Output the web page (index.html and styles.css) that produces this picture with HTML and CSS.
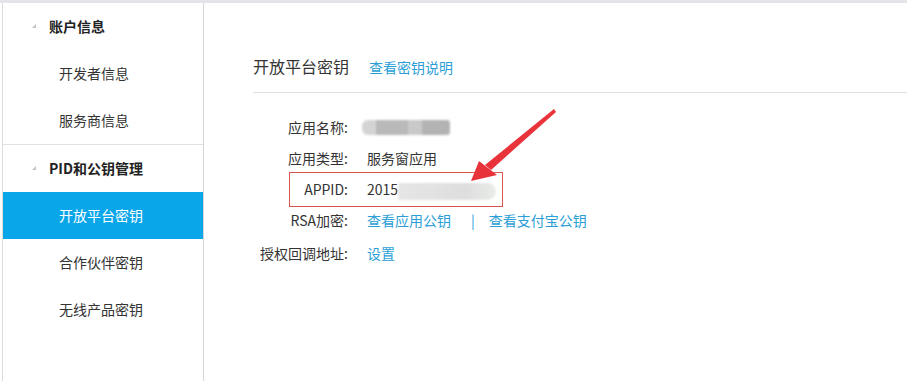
FILE: index.html
```html
<!DOCTYPE html>
<html lang="zh-CN">
<head>
    <meta charset="UTF-8">
    <title>开放平台密钥</title>
    <link rel="stylesheet" href="styles.css">
</head>
<body>
    <div class="page">
        <div class="sidebar">
            <div class="menu-group">
                <div class="group-title"><span class="caret"></span>账户信息</div>
                <div class="menu-item">开发者信息</div>
                <div class="menu-item">服务商信息</div>
            </div>
            <div class="menu-group">
                <div class="group-title"><span class="caret"></span>PID和公钥管理</div>
                <div class="menu-item active">开放平台密钥</div>
                <div class="menu-item">合作伙伴密钥</div>
                <div class="menu-item">无线产品密钥</div>
            </div>
        </div>
        <div class="main">
            <div class="title-bar">
                <h1>开放平台密钥</h1>
                <a class="link">查看密钥说明</a>
            </div>
            <div class="info-list">
                <div class="info-row">
                    <span class="label">应用名称:</span>
                    <span class="value"><span class="blur-name"><i></i><i></i><i></i><i></i></span></span>
                </div>
                <div class="info-row">
                    <span class="label">应用类型:</span>
                    <span class="value">服务窗应用</span>
                </div>
                <div class="info-row highlight">
                    <span class="label">APPID:</span>
                    <span class="value">2015<span class="blur-id"></span></span>
                </div>
                <div class="info-row">
                    <span class="label">RSA加密:</span>
                    <span class="value"><a class="link">查看应用公钥</a><span class="sep">|</span><a class="link">查看支付宝公钥</a></span>
                </div>
                <div class="info-row last">
                    <span class="label">授权回调地址:</span>
                    <span class="value"><a class="link">设置</a></span>
                </div>
            </div>
        </div>
    </div>
    <svg class="arrow" width="907" height="381" viewBox="0 0 907 381">
        <polygon points="554,109 556,112 491,170 485,165" fill="#e8333a"/>
        <polygon points="471,181 479,161 497,175" fill="#e8333a"/>
    </svg>
</body>
</html>
```

FILE: styles.css
```css
* {
    margin: 0;
    padding: 0;
    box-sizing: border-box;
}

body {
    font-family: "Noto Sans CJK SC", "Liberation Sans", sans-serif;
    font-size: 14px;
    color: #333;
    background: #fff;
    position: relative;
    width: 907px;
    height: 381px;
    overflow: hidden;
}

.page {
    display: flex;
    border-top: 3px solid #e4e5e8;
    height: 381px;
}

.sidebar {
    width: 202px;
    margin-left: 2px;
    border-left: 1px solid #dcdcdc;
    border-right: 1px solid #d6d6d6;
    flex-shrink: 0;
}

.menu-group {
    border-bottom: 1px solid #e2e2e2;
}

.menu-group:last-child {
    border-bottom: none;
}

.group-title {
    height: 47px;
    line-height: 47px;
    padding-left: 29px;
    font-weight: bold;
    color: #222;
    display: flex;
    align-items: center;
}

/* small grey corner arrow before group titles */
.caret {
    width: 0;
    height: 0;
    border-left: 4px solid transparent;
    border-bottom: 4px solid #c4c4c4;
    margin-right: 13px;
    margin-top: -1px;
}

.menu-item {
    height: 47px;
    line-height: 47px;
    padding-left: 56px;
    color: #333;
}

.menu-item.active {
    background: #0aa6ea;
    color: #fff;
}

.main {
    flex: 1;
    padding-left: 49px;
    padding-top: 49px;
}

.title-bar {
    display: flex;
    align-items: baseline;
    border-bottom: 1px solid #dedede;
    padding-bottom: 12px;
}

.title-bar h1 {
    font-size: 16px;
    font-weight: normal;
    color: #333;
    line-height: 28px;
    margin-right: 20px;
}

.link {
    color: #2b9ed6;
    text-decoration: none;
}

.info-list {
    padding-top: 19px;
}

.info-row {
    display: flex;
    height: 31px;
    line-height: 31px;
}

.info-row.last {
    margin-top: 2px;
}

.info-row.highlight {
    border: 1px solid #d9534f;
    width: 214px;
    height: 35px;
    line-height: 33px;
    margin: -2px 0 -2px 36px;
}

.label {
    width: 95px;
    text-align: right;
    flex-shrink: 0;
}

.highlight .label {
    width: 58px;
}

.value {
    padding-left: 19px;
    display: flex;
    align-items: center;
}

.sep {
    color: #2b9ed6;
    margin: 0 14px 0 20px;
}

.blur-name {
    display: flex;
    height: 15px;
    margin-left: -5px;
    filter: blur(1px);
}

.blur-name i {
    display: block;
    height: 15px;
}

.blur-name i:nth-child(1) { width: 14px; background: #d4d4d4; border-radius: 6px 0 0 6px; }
.blur-name i:nth-child(2) { width: 32px; background: #b9b9b9; }
.blur-name i:nth-child(3) { width: 14px; background: #c9c9c9; }
.blur-name i:nth-child(4) { width: 28px; background: #b3b3b3; border-radius: 0 3px 3px 0; }

.blur-id {
    display: block;
    width: 98px;
    height: 17px;
    margin-top: 3px;
    background: linear-gradient(90deg, #e6e6e6, #dedede 70%, #e9ece9);
    border-radius: 0 9px 9px 0;
    filter: blur(1px);
}

.arrow {
    position: absolute;
    left: 0;
    top: 0;
    pointer-events: none;
}
```
